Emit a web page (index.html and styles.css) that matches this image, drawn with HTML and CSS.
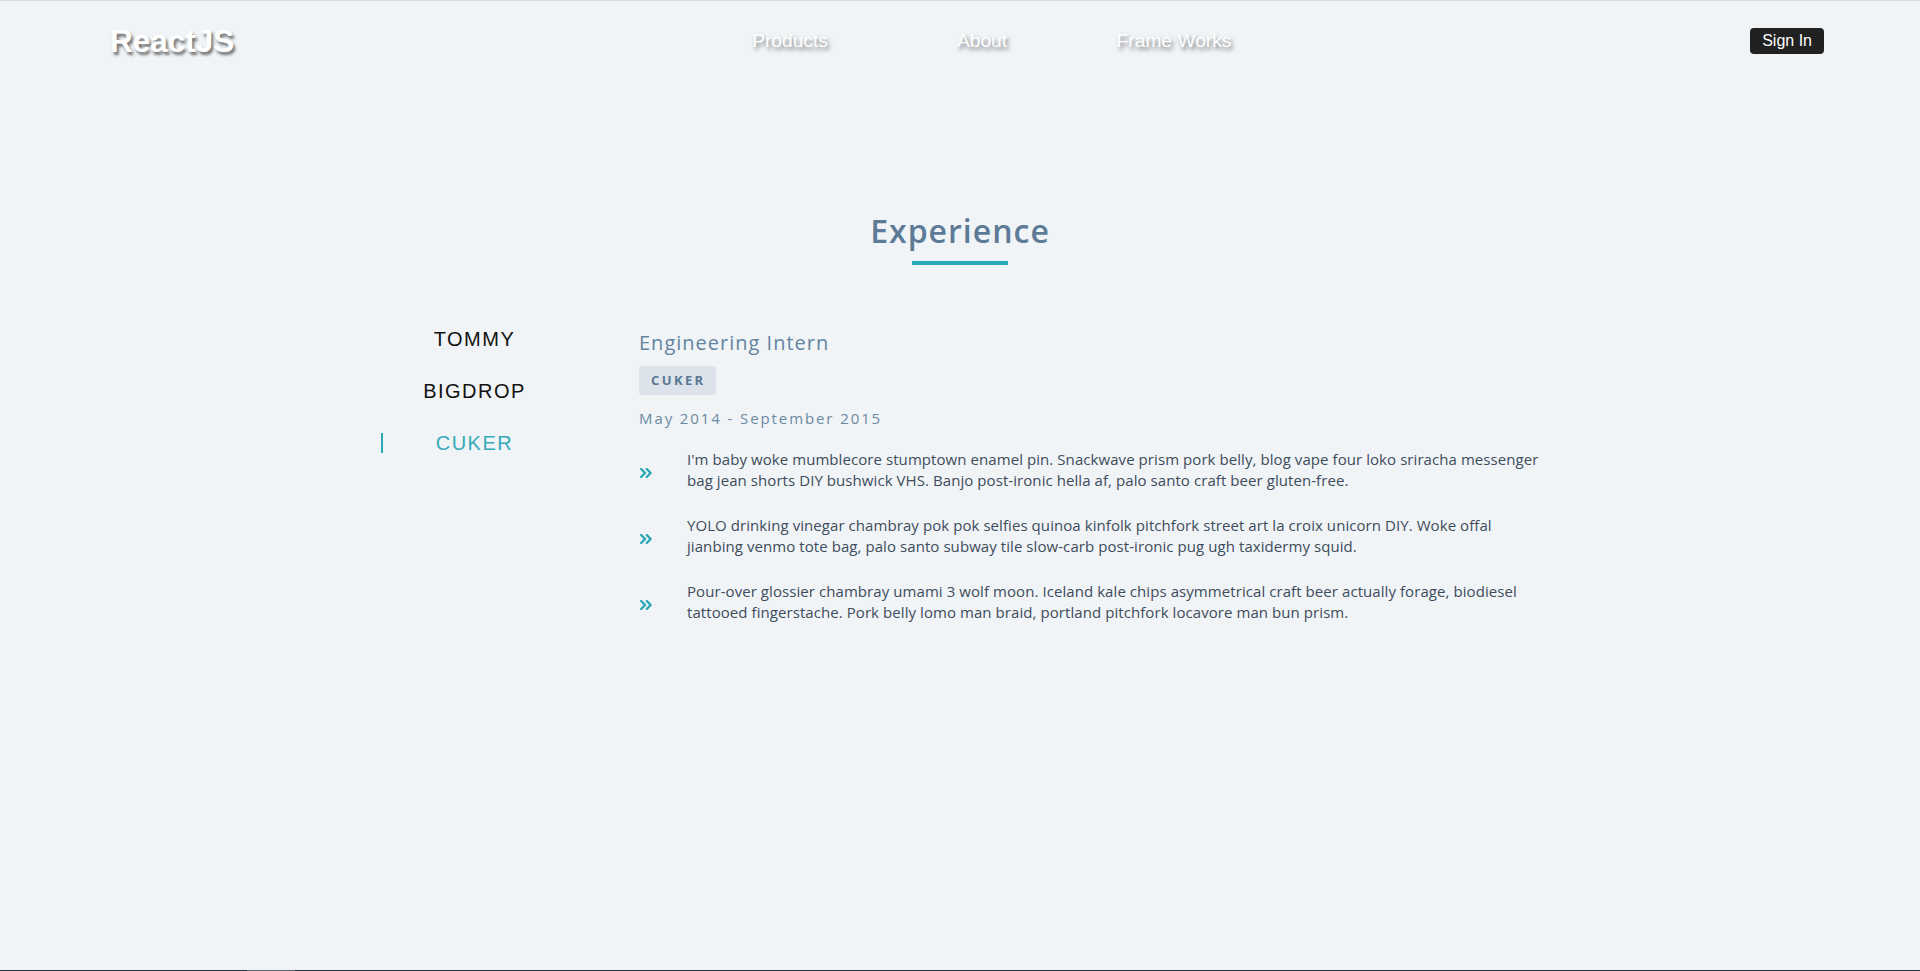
FILE: index.html
```html
<!DOCTYPE html>
<html lang="en">
<head>
<meta charset="utf-8">
<title>ReactJS - Experience</title>
<link rel="stylesheet" href="styles.css">
</head>
<body>
<div class="page">
  <header class="header">
    <div class="logo">ReactJS</div>
    <nav class="nav">
      <a class="nav-link" href="#">Products</a>
      <a class="nav-link" href="#">About</a>
      <a class="nav-link" href="#">Frame Works</a>
    </nav>
    <button class="signin">Sign In</button>
  </header>

  <main class="main">
    <div class="title-wrap">
      <h2 class="title">Experience</h2>
      <div class="title-line"></div>
    </div>

    <section class="jobs">
      <ul class="tabs">
        <li class="tab">TOMMY</li>
        <li class="tab">BIGDROP</li>
        <li class="tab tab-active">CUKER</li>
      </ul>

      <div class="job">
        <h3 class="job-title">Engineering Intern</h3>
        <span class="badge">CUKER</span>
        <p class="dates">May 2014 - September 2015</p>
        <ul class="duties">
          <li class="duty">
            <span class="duty-icon"><svg width="12" height="10" viewBox="0 0 12 10"><path d="M1.2 1 L5 5 L1.2 9 M6.8 1 L10.6 5 L6.8 9" fill="none" stroke="#2ba8b5" stroke-width="2.4" stroke-linecap="round" stroke-linejoin="round"/></svg></span>
            <p class="duty-text">I'm baby woke mumblecore stumptown enamel pin. Snackwave prism pork belly, blog vape four loko sriracha messenger bag jean shorts DIY bushwick VHS. Banjo post-ironic hella af, palo santo craft beer gluten-free.</p>
          </li>
          <li class="duty">
            <span class="duty-icon"><svg width="12" height="10" viewBox="0 0 12 10"><path d="M1.2 1 L5 5 L1.2 9 M6.8 1 L10.6 5 L6.8 9" fill="none" stroke="#2ba8b5" stroke-width="2.4" stroke-linecap="round" stroke-linejoin="round"/></svg></span>
            <p class="duty-text">YOLO drinking vinegar chambray pok pok selfies quinoa kinfolk pitchfork street art la croix unicorn DIY. Woke offal jianbing venmo tote bag, palo santo subway tile slow-carb post-ironic pug ugh taxidermy squid.</p>
          </li>
          <li class="duty">
            <span class="duty-icon"><svg width="12" height="10" viewBox="0 0 12 10"><path d="M1.2 1 L5 5 L1.2 9 M6.8 1 L10.6 5 L6.8 9" fill="none" stroke="#2ba8b5" stroke-width="2.4" stroke-linecap="round" stroke-linejoin="round"/></svg></span>
            <p class="duty-text">Pour-over glossier chambray umami 3 wolf moon. Iceland kale chips asymmetrical craft beer actually forage, biodiesel tattooed fingerstache. Pork belly lomo man braid, portland pitchfork locavore man bun prism.</p>
          </li>
        </ul>
      </div>
    </section>
  </main>

  <footer class="bottom-bar"><span class="bottom-thumb"></span></footer>
</div>
</body>
</html>
```

FILE: styles.css
```css
* { box-sizing: border-box; }

html, body {
  margin: 0;
  padding: 0;
  background: #f0f4f7;
}

body {
  font-family: "Open Sans", "Liberation Sans", Arial, sans-serif;
}

.page {
  min-height: 100vh;
  display: flex;
  flex-direction: column;
}

/* Header */
.header {
  height: 81px;
  border-top: 1px solid #d9dee4;
  display: flex;
  align-items: center;
  padding: 0 96px 0 110px;
}

.logo {
  font-family: "Liberation Sans", Arial, sans-serif;
  font-weight: 700;
  font-size: 31.5px;
  color: #ffffff;
  text-shadow: 2px 3px 3px rgba(0, 0, 0, 0.55);
  width: 123px;
}

.nav {
  display: flex;
  margin-left: 461px;
}

.nav-link {
  width: 192px;
  text-align: center;
  font-family: "Liberation Sans", Arial, sans-serif;
  font-size: 19.2px;
  color: #ffffff;
  text-decoration: none;
  text-shadow: 2px 3px 4px rgba(0, 0, 0, 0.5);
}

.signin {
  margin-left: auto;
  background: #212121;
  color: #ffffff;
  border: none;
  border-radius: 4px;
  font-family: "Liberation Sans", Arial, sans-serif;
  font-size: 16px;
  line-height: 18px;
  padding: 4px 12px;
  cursor: pointer;
}

/* Main */
.main {
  flex: 1;
}

.title-wrap {
  display: flex;
  flex-direction: column;
  align-items: center;
  padding-top: 131px;
}

.title {
  margin: 0;
  font-size: 32px;
  line-height: 38px;
  font-weight: 600;
  letter-spacing: 1px;
  color: #5d7b97;
}

.title-line {
  width: 96px;
  height: 4px;
  background: #2aa9b6;
  margin-top: 11px;
}

.jobs {
  width: 1158px;
  margin: 53px auto 0;
  display: flex;
}

.tabs {
  list-style: none;
  margin: 0;
  padding: 0;
  width: 187px;
  flex-shrink: 0;
  display: flex;
  flex-direction: column;
  gap: 10px;
}

.tab {
  position: relative;
  height: 42px;
  line-height: 42px;
  text-align: center;
  font-family: "Liberation Sans", Arial, sans-serif;
  font-size: 20px;
  letter-spacing: 1.5px;
  color: #111111;
  cursor: pointer;
}

.tab-active {
  color: #35abb8;
}

.tab-active::before {
  content: "";
  position: absolute;
  left: 0;
  top: 11px;
  width: 2px;
  height: 20px;
  background: #2aa9b6;
}

.job {
  margin-left: 71px;
  flex: 1;
  padding-top: 11px;
}

.job-title {
  margin: 0;
  font-size: 20px;
  line-height: 28px;
  font-weight: 400;
  letter-spacing: 1px;
  color: #6484a0;
}

.badge {
  display: inline-block;
  margin-top: 9px;
  background: #dce3eb;
  border-radius: 3px;
  padding: 6px 10px 6px 12px;
  font-size: 13px;
  line-height: 17px;
  font-weight: 700;
  letter-spacing: 2.4px;
  color: #5a7794;
}

.dates {
  margin: 13px 0 0;
  font-size: 15px;
  line-height: 20px;
  letter-spacing: 1.9px;
  color: #6d89a2;
}

.duties {
  list-style: none;
  margin: 21px 0 0;
  padding: 0;
  display: flex;
  flex-direction: column;
  gap: 25px;
}

.duty {
  display: flex;
  align-items: center;
}

.duty-icon {
  width: 48px;
  flex-shrink: 0;
  padding-left: 1px;
  padding-top: 6px;
  display: flex;
}

.duty-text {
  margin: 0;
  font-size: 15px;
  line-height: 20.5px;
  letter-spacing: 0.07px;
  color: #3e4c5b;
}

/* bottom edge */
.bottom-bar {
  height: 1px;
  background: #1f3442;
  display: flex;
}

.bottom-thumb {
  margin-left: 247px;
  width: 48px;
  height: 1px;
  background: #56646e;
}
```
